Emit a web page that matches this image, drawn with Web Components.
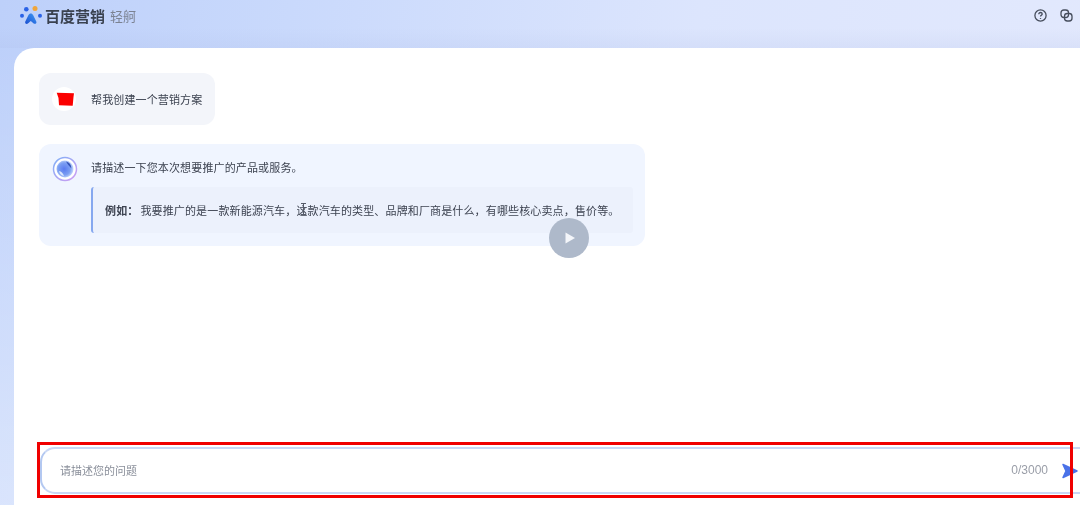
<!DOCTYPE html>
<html lang="zh">
<head>
<meta charset="utf-8">
<title>百度营销 轻舸</title>
<style>
  html, body { margin: 0; height: 100%; overflow: hidden; }
  html { background: #dfe6fc; }
  body {
    font-family: "Noto Sans CJK SC", "Liberation Sans", sans-serif;
    background:
      linear-gradient(180deg, transparent 28px, rgba(165,180,225,.14) 48px, transparent 48px),
      linear-gradient(180deg, transparent 48px, rgba(255,255,255,.4) 100%),
      linear-gradient(100deg, #bdd0fa 0%, #c9d9fc 25%, #dce5fd 60%, #e3e9fd 100%);
    display: flex;
    flex-direction: column;
    filter: blur(0.6px);
  }
</style>
</head>
<body>
<app-header></app-header>
<chat-panel>
  <chat-bubble kind="user">
    <svg slot="avatar" width="24" height="24" viewBox="0 0 24 24"><circle cx="12" cy="12" r="12" fill="#fff"/><path d="M4.700 5.700 22 6.300 21.500 10 20.700 18.700 7 18.200 6.500 11Z" fill="#fb0000"/></svg>
    帮我创建一个营销方案
  </chat-bubble>
  <chat-bubble kind="bot">
    <svg slot="avatar" width="26" height="26" viewBox="0 0 26 26">
      <defs>
        <linearGradient id="ring" x1="0" y1="0" x2="1" y2="1"><stop offset="0" stop-color="#7fb0f7"/><stop offset="1" stop-color="#d09cf2"/></linearGradient>
        <radialGradient id="ball" cx=".45" cy=".5" r=".55"><stop offset="0" stop-color="#5a7bf0"/><stop offset=".65" stop-color="#7c9ff2"/><stop offset="1" stop-color="#c6d8fb"/></radialGradient>
      </defs>
      <circle cx="13" cy="13" r="11.500" fill="#fff" stroke="url(#ring)" stroke-width="1.500"/>
      <circle cx="13" cy="13" r="8.500" fill="url(#ball)"/>
      <path d="M14 5.500c3.500.8 5.500 3.500 5.300 7-1.800-2.300-3.800-4-5.300-7Z" fill="#3554b8"/>
      <path d="M7 15c2 .5 4 2 5 5-2.500-.3-4.500-2.300-5-5Z" fill="#dbe7fd"/>
    </svg>
    请描述一下您本次想要推广的产品或服务。
    <quote-box slot="extra"><b>例如：</b>我要推广的是一款新能源汽车，这款汽车的类型、品牌和厂商是什么，有哪些核心卖点，售价等。</quote-box>
  </chat-bubble>
  <prompt-box slot="footer" placeholder="请描述您的问题" count="0/3000"></prompt-box>
</chat-panel>
<text-cursor></text-cursor>
<play-button></play-button>

<script>
class AppHeader extends HTMLElement {
  connectedCallback() {
    this.attachShadow({ mode: 'open' });
    this.shadowRoot.innerHTML = `
      <style>
        :host { display: flex; flex: none; height: 48px; align-items: flex-start; justify-content: space-between; padding: 6px 7px 0 20px; box-sizing: border-box; }
        .brand { display: flex; align-items: center; gap: 3px; height: 20px; }
        .name { font-size: 15px; font-weight: 700; color: #39414f; line-height: 20px; }
        .sub { font-size: 13px; color: #7b8291; margin-left: 2px; line-height: 20px; }
        .tools { display: flex; gap: 13px; margin-top: 3px; }
        svg { display: block; }
      </style>
      <div class="brand">
        <svg width="22" height="20" viewBox="0 0 22 20">
          <defs><linearGradient id="a" x1="0" y1="1" x2="1" y2="0"><stop offset="0" stop-color="#1b4fd0"/><stop offset="1" stop-color="#3f9bf5"/></linearGradient></defs>
          <circle cx="2" cy="9.700" r="2" fill="#2a62e6"/>
          <circle cx="6.300" cy="3.300" r="2.300" fill="#2a62e6"/>
          <circle cx="15" cy="2.600" r="2.500" fill="#f0a63c"/>
          <circle cx="20" cy="9.700" r="2" fill="#2a62e6"/>
          <path d="M10.800 7.500c1.100 0 1.800.6 2.300 1.500l3.200 6.500c.8 1.800-1.200 3.100-2.600 1.900l-2.900-2.500-2.900 2.500c-1.500 1.300-3.400-.3-2.600-1.900l3.200-6.500c.5-.9 1.200-1.500 2.300-1.500Z" fill="url(#a)"/>
        </svg>
        <span class="name">百度营销</span>
        <span class="sub">轻舸</span>
      </div>
      <div class="tools">
        <svg width="13" height="13" viewBox="0 0 13 13" fill="none" stroke="#464d5c" stroke-width="1.300"><circle cx="6.500" cy="6.500" r="5.600"/><path d="M4.800 5.200c0-1 .8-1.700 1.700-1.700s1.700.7 1.700 1.600c0 1.200-1.700 1.300-1.700 2.500"/><path d="M6.500 9v.9"/></svg>
        <svg width="13" height="13" viewBox="0 0 13 13" fill="none" stroke="#464d5c" stroke-width="1.300"><rect x="1" y="1" width="7.500" height="7.500" rx="2.800"/><rect x="4.500" y="4.500" width="7.500" height="7.500" rx="2.800"/></svg>
      </div>`;
  }
}

class ChatPanel extends HTMLElement {
  connectedCallback() {
    this.attachShadow({ mode: 'open' });
    this.shadowRoot.innerHTML = `
      <style>
        :host { display: flex; flex-direction: column; flex: 1; margin-left: 14px; min-height: 0; background: #fff; border-top-left-radius: 20px; padding: 25px 0 11px 25px; box-sizing: border-box; }
        .list { flex: 1; display: flex; flex-direction: column; align-items: flex-start; gap: 19px; }
      </style>
      <div class="list"><slot></slot></div>
      <slot name="footer"></slot>`;
  }
}

class ChatBubble extends HTMLElement {
  connectedCallback() {
    const bot = this.getAttribute('kind') === 'bot';
    this.attachShadow({ mode: 'open' });
    this.shadowRoot.innerHTML = `
      <style>
        :host { display: flex; gap: ${bot ? 13 : 15}px; box-sizing: border-box; border-radius: 12px; font-size: 11px; line-height: 16px; letter-spacing: .14px; color: #3c4250; white-space: nowrap;
          background: ${bot ? '#f0f5ff' : '#f3f5fa'};
          padding: ${bot ? '12px 13px 13px 13px' : '14px 13px 14px 13px'};
          ${bot ? 'width: 606px; height: 102px;' : 'width: 176px; height: 52px;'} }
        .avatar { flex: none; display: block; ${bot ? 'height: 26px;' : 'height: 24px;'} }
        .body { flex: 1; min-width: 0; padding-top: ${bot ? 3 : 4}px; margin-top: -.5px; }
        ::slotted(svg) { display: block; }
      </style>
      <div class="avatar"><slot name="avatar"></slot></div>
      <div class="body"><slot></slot><slot name="extra"></slot></div>`;
  }
}

class QuoteBox extends HTMLElement {
  connectedCallback() {
    this.attachShadow({ mode: 'open' });
    this.shadowRoot.innerHTML = `
      <style>
        :host { display: block; box-sizing: border-box; margin-top: 12px; width: 542px; height: 46px; padding: 15px 0 0 12px; border-left: 2px solid #86a8ef; border-radius: 3px; background: #ecf1fc; color: #3c4250; white-space: nowrap; }
        ::slotted(b) { font-weight: 700; margin-right: 2px; }
      </style>
      <slot></slot>`;
  }
}

class PromptBox extends HTMLElement {
  connectedCallback() {
    this.attachShadow({ mode: 'open' });
    this.shadowRoot.innerHTML = `
      <style>
        :host { display: block; position: relative; margin-left: 1px; }
        .field { display: flex; align-items: center; justify-content: space-between; box-sizing: border-box; height: 47px; margin-right: -12px; padding: 0 44px 2px 18px; border: 2px solid #c9d7f5; border-left-color: #b3c8f1; border-right: 0; border-radius: 15px 0 0 15px; font-size: 11px; color: #8a8f9a; }
        .count { font-family: "Liberation Sans", sans-serif; font-size: 12px; color: #9a9ea8; }
        .send { position: absolute; left: 1022px; top: 16px; display: block; }
        .mark { position: absolute; left: -3px; right: 7px; top: -5px; bottom: -4px; border: 3px solid #f00000; pointer-events: none; }
      </style>
      <div class="field">
        <span>${this.getAttribute('placeholder')}</span>
        <span class="count">${this.getAttribute('count')}</span>
      </div>
      <svg class="send" width="16" height="16" viewBox="0 0 16 16"><path d="M1 1.500 15 8 1 14.500 4 8Z" fill="#4a72e8" stroke="#4a72e8" stroke-width="1.500" stroke-linejoin="round"/></svg>
      <div class="mark"></div>`;
  }
}

class TextCursor extends HTMLElement {
  connectedCallback() {
    this.attachShadow({ mode: 'open' });
    this.shadowRoot.innerHTML = `
      <style>:host { position: absolute; left: 300px; top: 203px; width: 7px; height: 12px; } svg { display: block; }</style>
      <svg width="7" height="12" viewBox="0 0 7 12" fill="none" stroke="#555b68"><path d="M1 .500h5M3.500 .500v11M1 11.500h5"/></svg>`;
  }
}

class PlayButton extends HTMLElement {
  connectedCallback() {
    this.attachShadow({ mode: 'open' });
    this.shadowRoot.innerHTML = `
      <style>
        :host { position: absolute; left: 549px; top: 218px; width: 40px; height: 40px; border-radius: 50%; background: #aeb9ca; display: flex; align-items: center; justify-content: center; }
        svg { display: block; margin-left: 1px; }
      </style>
      <svg width="12" height="12" viewBox="0 0 12 12"><path d="M1.500 .500 11 6 1.500 11.500Z" fill="#f4f6fa"/></svg>`;
  }
}

customElements.define('app-header', AppHeader);
customElements.define('chat-panel', ChatPanel);
customElements.define('chat-bubble', ChatBubble);
customElements.define('quote-box', QuoteBox);
customElements.define('prompt-box', PromptBox);
customElements.define('text-cursor', TextCursor);
customElements.define('play-button', PlayButton);
</script>
</body>
</html>
